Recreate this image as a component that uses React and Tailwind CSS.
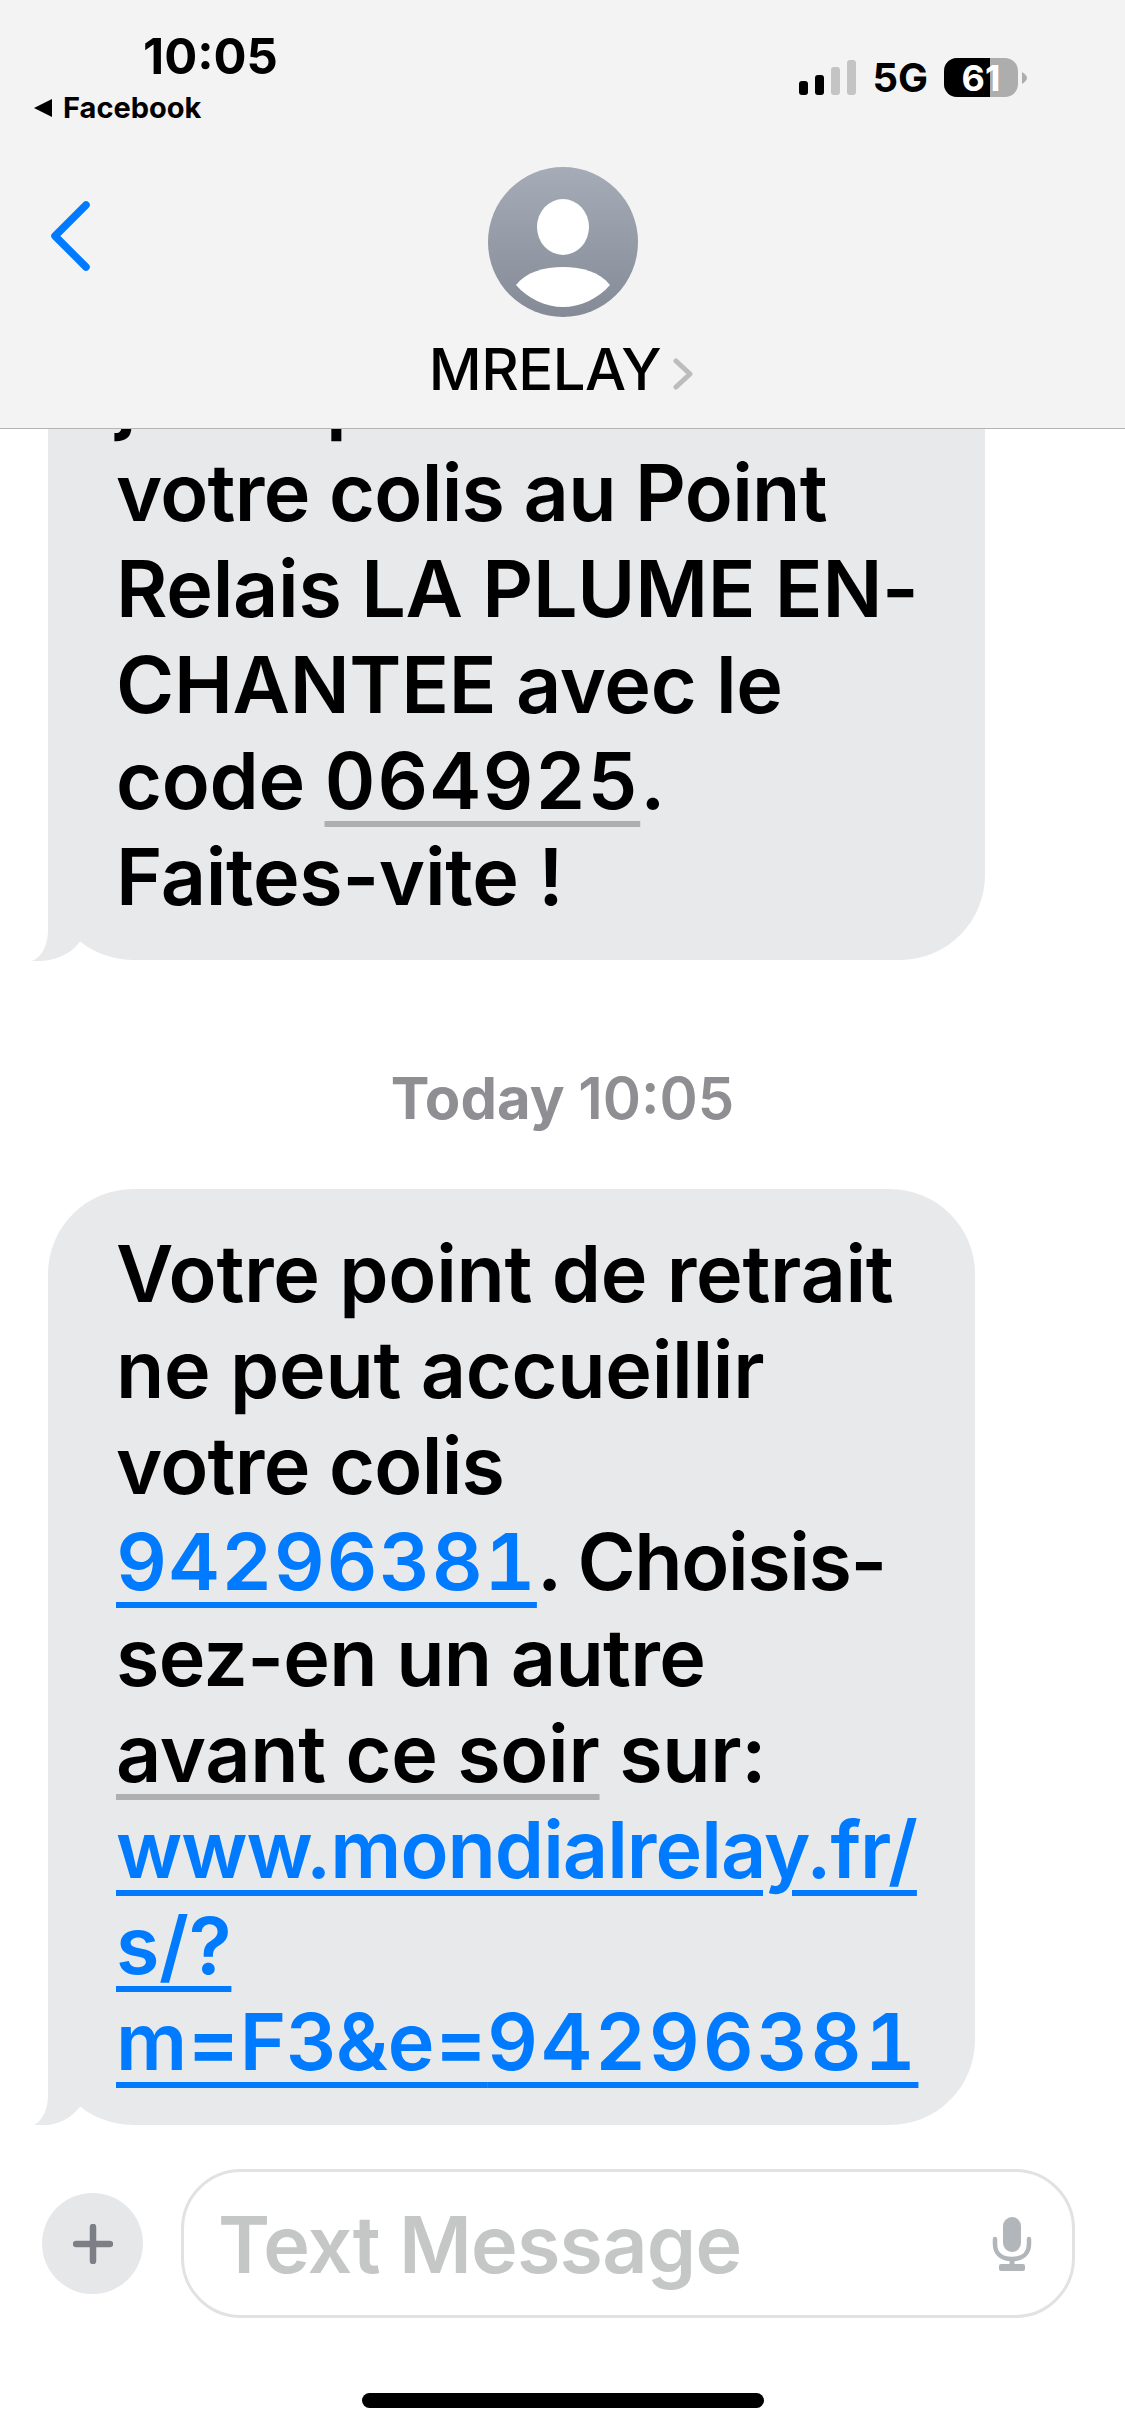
const font = { fontFamily: 'Inter, "Liberation Sans", sans-serif' };

function StatusBar() {
  return (
    <div className="flex justify-between h-[130px] pt-[32px] pl-[33px] pr-[98px]">
      <div className="flex flex-col">
        <span className="ml-[110px] text-[49px] leading-[50px] font-bold text-black">10:05</span>
        <div className="flex items-center gap-[11px] mt-[11px]">
          <svg width="19" height="20" viewBox="0 0 19 20"><path d="M19 1 V19 L1 10 Z" fill="#000" /></svg>
          <span className="text-[29px] leading-[30px] font-bold text-black">Facebook</span>
        </div>
      </div>
      <div className="flex items-end gap-[16px] h-[65px]">
        <div className="flex items-end gap-[7px] mb-[2px]">
          <div className="w-[9px] h-[14px] rounded-[3px] bg-black" />
          <div className="w-[9px] h-[20px] rounded-[3px] bg-black" />
          <div className="w-[9px] h-[28px] rounded-[3px] bg-[#c4c4c4]" />
          <div className="w-[9px] h-[35px] rounded-[3px] bg-[#c4c4c4]" />
        </div>
        <span className="text-[40px] leading-[39px] font-bold text-black">5G</span>
        <div className="flex items-center gap-[4px]">
          <div className="relative w-[74px] h-[39px] rounded-[13px] bg-[#adadad] flex items-center justify-center">
            <div className="absolute left-0 top-0 bottom-0 w-[46px] rounded-l-[13px] bg-black" />
            <span className="relative text-[36px] leading-[38px] font-bold text-white">61</span>
          </div>
          <svg width="5" height="12" viewBox="0 0 5 12"><path d="M0 0 C3 2 5 4 5 6 C5 8 3 10 0 12 Z" fill="#adadad" /></svg>
        </div>
      </div>
    </div>
  );
}

function Avatar() {
  return (
    <svg width="150" height="150" viewBox="0 0 150 150">
      <defs>
        <linearGradient id="av" x1="0" y1="0" x2="0" y2="1">
          <stop offset="0" stopColor="#a5acb7" />
          <stop offset="1" stopColor="#858b96" />
        </linearGradient>
      </defs>
      <circle cx="75" cy="75" r="75" fill="url(#av)" />
      <ellipse cx="75" cy="60" rx="26" ry="28" fill="#fff" />
      <path d="M28 118 C38 105 56 100 75 100 C94 100 112 105 122 118 C110 132 92 140 75 140 C58 140 40 132 28 118 Z" fill="#fff" />
    </svg>
  );
}

function Header() {
  return (
    <header className="relative h-[429px] shrink-0 bg-[#f3f3f3] border-b border-[#b4b4b4]">
      <StatusBar />
      <div className="absolute left-[49px] top-[201px]">
        <svg width="42" height="70" viewBox="0 0 42 70" fill="none">
          <path d="M37 4 L6 35 L37 66" stroke="#007aff" strokeWidth="7.5" strokeLinecap="round" strokeLinejoin="round" />
        </svg>
      </div>
      <div className="flex flex-col items-center mt-[37px]">
        <Avatar />
        <div className="flex items-end gap-[11px] mr-[2px] mt-[22px]">
          <span className="text-[58px] leading-[60px] font-medium tracking-[-0.5px] text-black">MRELAY</span>
          <svg className="mb-[9px]" width="22" height="32" viewBox="0 0 22 32" fill="none">
            <path d="M4 3 L18 16 L4 29" stroke="#bcbcbc" strokeWidth="5" strokeLinecap="round" strokeLinejoin="round" />
          </svg>
        </div>
      </div>
    </header>
  );
}

function Bubble({ width, children }) {
  return (
    <div className={`relative ml-[48px] ${width} rounded-[85px] bg-[#e8e9eb] py-[36px] pl-[68px] text-[79px] leading-[96px] font-semibold tracking-[-0.3px] text-black whitespace-nowrap`}>
      {children}
      <svg className="absolute left-[-16px] bottom-[-1px]" width="70" height="106" viewBox="0 0 70 106">
        <path d="M16 0 V75 C16 90 10 102 0 106 C18 107 36 102 47 88 L70 60 V0 Z" fill="#e8e9eb" />
      </svg>
    </div>
  );
}

function Messages() {
  const grayLine = 'underline decoration-[#adafb1] decoration-[6px] underline-offset-[12px]';
  const blueLink = 'text-[#007aff] underline decoration-[#007aff] decoration-[6px] underline-offset-[12px]';
  const digits = 'tabular-nums tracking-[1.5px]';
  return (
    <main className="flex-1 flex flex-col justify-end overflow-hidden bg-white">
      <Bubble width="w-[937px]">
        jours pour retirer<br />
        <span className="tracking-[-0.7px]">votre colis au Point</span><br />
        Relais LA PLUME EN-<br />
        CHANTEE avec le<br />
        code <span className={`${grayLine} ${digits}`}>064925</span>.<br />
        Faites-vite !
      </Bubble>
      <p className="mt-[104px] mb-[57px] text-center text-[58px] leading-[68px] font-bold text-[#8e8e93]">
        Today <span className="font-semibold">10:05</span>
      </p>
      <Bubble width="w-[927px]">
        Votre point de retrait<br />
        ne peut accueillir<br />
        <span className="tracking-[-0.7px]">votre colis</span><br />
        <span className={`${blueLink} ${digits}`}>94296381</span><span className="tracking-[-1.4px]">. Choisis-</span><br />
        <span className="tracking-[-0.7px]">sez-en un autre</span><br />
        <span className={grayLine}>avant ce soir</span> sur:<br />
        <span className={`${blueLink} tracking-[-1px]`}>www.mondialrelay.fr/</span><br />
        <span className={blueLink}>s/?</span><br />
        <span className={blueLink}>m=F3&amp;e=<span className="tabular-nums tracking-[2.8px]">94296381</span></span>
      </Bubble>
    </main>
  );
}

function Composer() {
  return (
    <footer className="h-[311px] shrink-0 bg-white flex flex-col">
      <div className="flex items-center gap-[38px] pl-[42px] pr-[50px] mt-[44px]">
        <div className="w-[101px] h-[101px] rounded-full bg-[#e6e7e9] flex items-center justify-center">
          <svg width="40" height="40" viewBox="0 0 40 40" fill="none">
            <path d="M20 3 V37 M3 20 H37" stroke="#7c7f85" strokeWidth="6.5" strokeLinecap="round" />
          </svg>
        </div>
        <div className="flex-1 h-[149px] rounded-[60px] border-[3px] border-[#e1e2e3] flex items-center justify-between pl-[34px] pr-[40px]">
          <span className="text-[79px] leading-[96px] font-semibold tracking-[-0.8px] text-[#c5c7c7]">Text Message</span>
          <svg width="40" height="54" viewBox="0 0 40 54" fill="none">
            <rect x="11" y="0" width="18" height="35" rx="9" fill="#b1b6bb" />
            <path d="M3 22 V27 C3 37 10 42 20 42 C30 42 37 37 37 27 V22" stroke="#b1b6bb" strokeWidth="4.5" strokeLinecap="round" />
            <path d="M20 42 V49" stroke="#b1b6bb" strokeWidth="5" />
            <rect x="7" y="47" width="26" height="7" rx="2" fill="#b1b6bb" />
          </svg>
        </div>
      </div>
      <div className="mt-[75px] mx-auto w-[402px] h-[15px] rounded-full bg-black" />
    </footer>
  );
}

export default function App() {
  return (
    <div className="w-[1125px] h-[2436px] flex flex-col overflow-hidden bg-white" style={font}>
      <Header />
      <Messages />
      <Composer />
    </div>
  );
}
